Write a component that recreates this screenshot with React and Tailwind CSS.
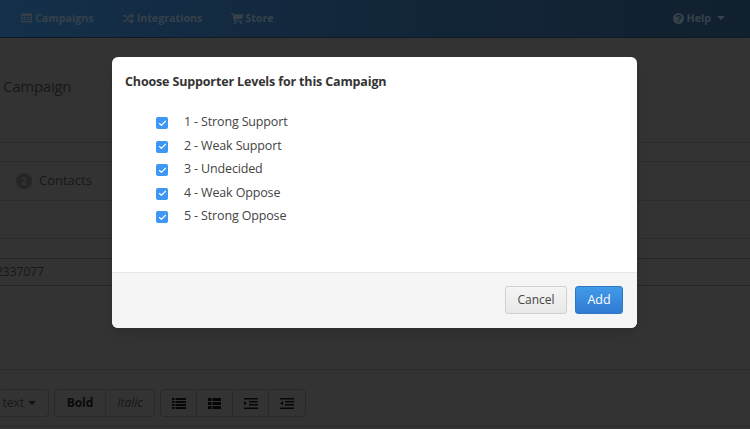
import React from 'react';
import { Shuffle, Check } from 'lucide-react';

const levels = ['1 - Strong Support', '2 - Weak Support', '3 - Undecided', '4 - Weak Oppose', '5 - Strong Oppose'];

const Caret = ({ className }) => (
    <span className={`inline-block border-x-[4px] border-t-[4px] border-x-transparent ${className}`}></span>
);

const ToolButton = ({ children, className = '' }) => (
    <div className={`h-full flex items-center justify-center border-r border-[#d4d4d4] last:border-r-0 ${className}`}>
        {children}
    </div>
);

const GridIcon = () => (
    <svg width="11" height="10" viewBox="0 0 12 10" fill="currentColor">
        <path d="M0 0h12v10H0zM1 2.5v1.5h2.6V2.500zM4.400 2.500v1.500h3.200V2.500zM8.400 2.500v1.500H11V2.500zM1 4.800v1.500h2.600V4.800zM4.400 4.800v1.500h3.200V4.800zM8.400 4.800v1.500H11V4.800zM1 7.100v1.500h2.600V7.100zM4.400 7.100v1.500h3.200V7.100zM8.400 7.100v1.500H11V7.100z" fillRule="evenodd" />
    </svg>
);

const CartIcon = () => (
    <svg width="12" height="11" viewBox="0 0 12 11" fill="currentColor">
        <path d="M0 0h2.200l.3 1.200H12l-.8 4.600-7.500.7.200 1h7.300v1H3L1.500 1H0z" />
        <circle cx="4" cy="9.800" r="1.100" />
        <circle cx="9.800" cy="9.800" r="1.100" />
    </svg>
);

const HelpIcon = () => (
    <svg width="11" height="11" viewBox="0 0 11 11">
        <circle cx="5.500" cy="5.500" r="5.500" fill="currentColor" />
        <path d="M3.700 4.200c0-2.300 3.800-2.300 3.800-.1 0 1.300-1.500 1.300-1.500 2.500" fill="none" stroke="#12222f" strokeWidth="1.300" />
        <rect x="4.700" y="7.500" width="1.500" height="1.500" fill="#12222f" />
    </svg>
);

const ListIcon = () => (
    <svg width="14" height="11" viewBox="0 0 14 11" fill="currentColor">
        <path d="M0 0h2.500v2H0zM3.500 0H14v2H3.500zM0 3h2.500v2H0zM3.500 3H14v2H3.500zM0 6h2.500v2H0zM3.500 6H14v2H3.500zM0 9h2.500v2H0zM3.500 9H14v2H3.500z" />
    </svg>
);

const BlockListIcon = () => (
    <svg width="13" height="11" viewBox="0 0 13 11" fill="currentColor">
        <path d="M0 0h3.500v3H0zM4.500 0H13v3H4.500zM0 4h3.500v3H0zM4.500 4H13v3H4.500zM0 8h3.500v3H0zM4.500 8H13v3H4.500z" />
    </svg>
);

const IndentIcon = () => (
    <svg width="14" height="11" viewBox="0 0 14 11" fill="currentColor">
        <path d="M0 0h14v1.500H0zM5 3h9v1.500H5zM5 6h9v1.500H5zM0 9.500h14V11H0zM0 3l3 2.200L0 7.500z" />
    </svg>
);

const OutdentIcon = () => (
    <svg width="14" height="11" viewBox="0 0 14 11" fill="currentColor">
        <path d="M0 0h14v1.500H0zM5 3h9v1.500H5zM5 6h9v1.500H5zM0 9.500h14V11H0zM3 3L0 5.200l3 2.300z" />
    </svg>
);

const App = () => {
    return (
        <div className="relative w-[750px] h-[429px] overflow-hidden bg-white text-[#777] font-['Open_Sans',sans-serif]">
            {/* Page behind the dialog */}
            <nav className="relative z-10 h-[38px] flex items-center justify-between pl-[21px] pr-[25px] bg-gradient-to-r from-[#14304a] via-[#12263a] to-[#11202e] border-b border-[#0f1a24] text-[#36414b] text-[10.7px] font-bold">
                <div className="flex items-center gap-[29px]">
                    <span className="flex items-center gap-[3px]"><GridIcon />Campaigns</span>
                    <span className="flex items-center gap-[3px]"><Shuffle size={11} strokeWidth={3} />Integrations</span>
                    <span className="flex items-center gap-[2px]"><CartIcon />Store</span>
                </div>
                <span className="flex items-center gap-[2px]">
                    <HelpIcon />Help<Caret className="ml-[4px] border-t-[#36414b]" />
                </span>
            </nav>

            <div className="h-[104px] pt-[36px] pl-[3px] text-[15px] leading-[24px] tracking-[-0.25px]">Campaign</div>

            <div className="h-[19px] border-t border-[#ddd]"></div>
            <div className="h-[39px] border-t border-[#ddd] flex items-center pl-[16px] text-[13px]">
                <span className="w-[16px] h-[16px] rounded-full bg-[#bbb] text-white text-[10px] font-bold flex items-center justify-center mr-[7px]">2</span>
                Contacts
            </div>
            <div className="h-[38px] border-t border-[#ddd]"></div>
            <div className="h-[20px] border-t border-[#ddd]"></div>
            <div className="h-[28px] border-y border-[#bbb] flex items-center text-[12px] -ml-[4px]">2337077</div>

            <div className="mt-[83px] h-[58px] border-y border-[#ddd] pt-[19px] flex gap-[5px] -ml-[2px]">
                <div className="h-[28px] w-[51px] border border-[#ccc] rounded-[4px] flex items-center justify-end pr-[12px] gap-[4px] text-[12px]">
                    text<Caret className="border-t-[#555]" />
                </div>
                <div className="h-[28px] flex border border-[#ccc] rounded-[4px] text-[12px]">
                    <ToolButton className="w-[51px] font-bold text-[#333]">Bold</ToolButton>
                    <ToolButton className="w-[48px] italic">Italic</ToolButton>
                </div>
                <div className="h-[28px] flex border border-[#ccc] rounded-[4px] text-[#222]">
                    <ToolButton className="w-[36px]"><ListIcon /></ToolButton>
                    <ToolButton className="w-[36px]"><BlockListIcon /></ToolButton>
                    <ToolButton className="w-[36px]"><IndentIcon /></ToolButton>
                    <ToolButton className="w-[36px]"><OutdentIcon /></ToolButton>
                </div>
            </div>

            {/* Backdrop */}
            <div className="absolute inset-0 bg-black/80"></div>

            {/* Dialog */}
            <div className="absolute z-20 left-[112px] top-[57px] w-[525px] h-[271px] flex flex-col bg-white rounded-[6px] overflow-hidden shadow-lg">
                <h4 className="pt-[16px] pl-[13px] text-[12.5px] tracking-[-0.15px] leading-[18px] font-bold text-[#333]">
                    Choose Supporter Levels for this Campaign
                </h4>
                <ul className="mt-[20px] pl-[44px] flex flex-col flex-1">
                    {levels.map((level) => (
                        <li key={level} className="h-[23.5px] flex items-center text-[12.5px] tracking-[-0.15px] text-[#444]">
                            <span className="w-[12px] h-[12px] mt-[1px] rounded-[2px] bg-[#3f97f5] text-white flex items-center justify-center">
                                <Check size={9} strokeWidth={3} />
                            </span>
                            <span className="ml-[16px]">{level}</span>
                        </li>
                    ))}
                </ul>
                <div className="h-[56px] flex items-start justify-end gap-[8px] pt-[13px] pr-[14px] bg-[#f5f5f5] border-t border-[#e5e5e5]">
                    <button className="h-[28px] w-[62px] rounded-[3px] border border-[#d0d0d0] bg-gradient-to-b from-[#f5f5f5] to-[#e8e8e8] text-[12px] text-[#444]">
                        Cancel
                    </button>
                    <button className="h-[28px] w-[48px] rounded-[3px] border border-[#2d78c4] bg-gradient-to-b from-[#429be8] to-[#3179d4] text-[12.5px] text-white">
                        Add
                    </button>
                </div>
            </div>
        </div>
    );
};

export default App;
